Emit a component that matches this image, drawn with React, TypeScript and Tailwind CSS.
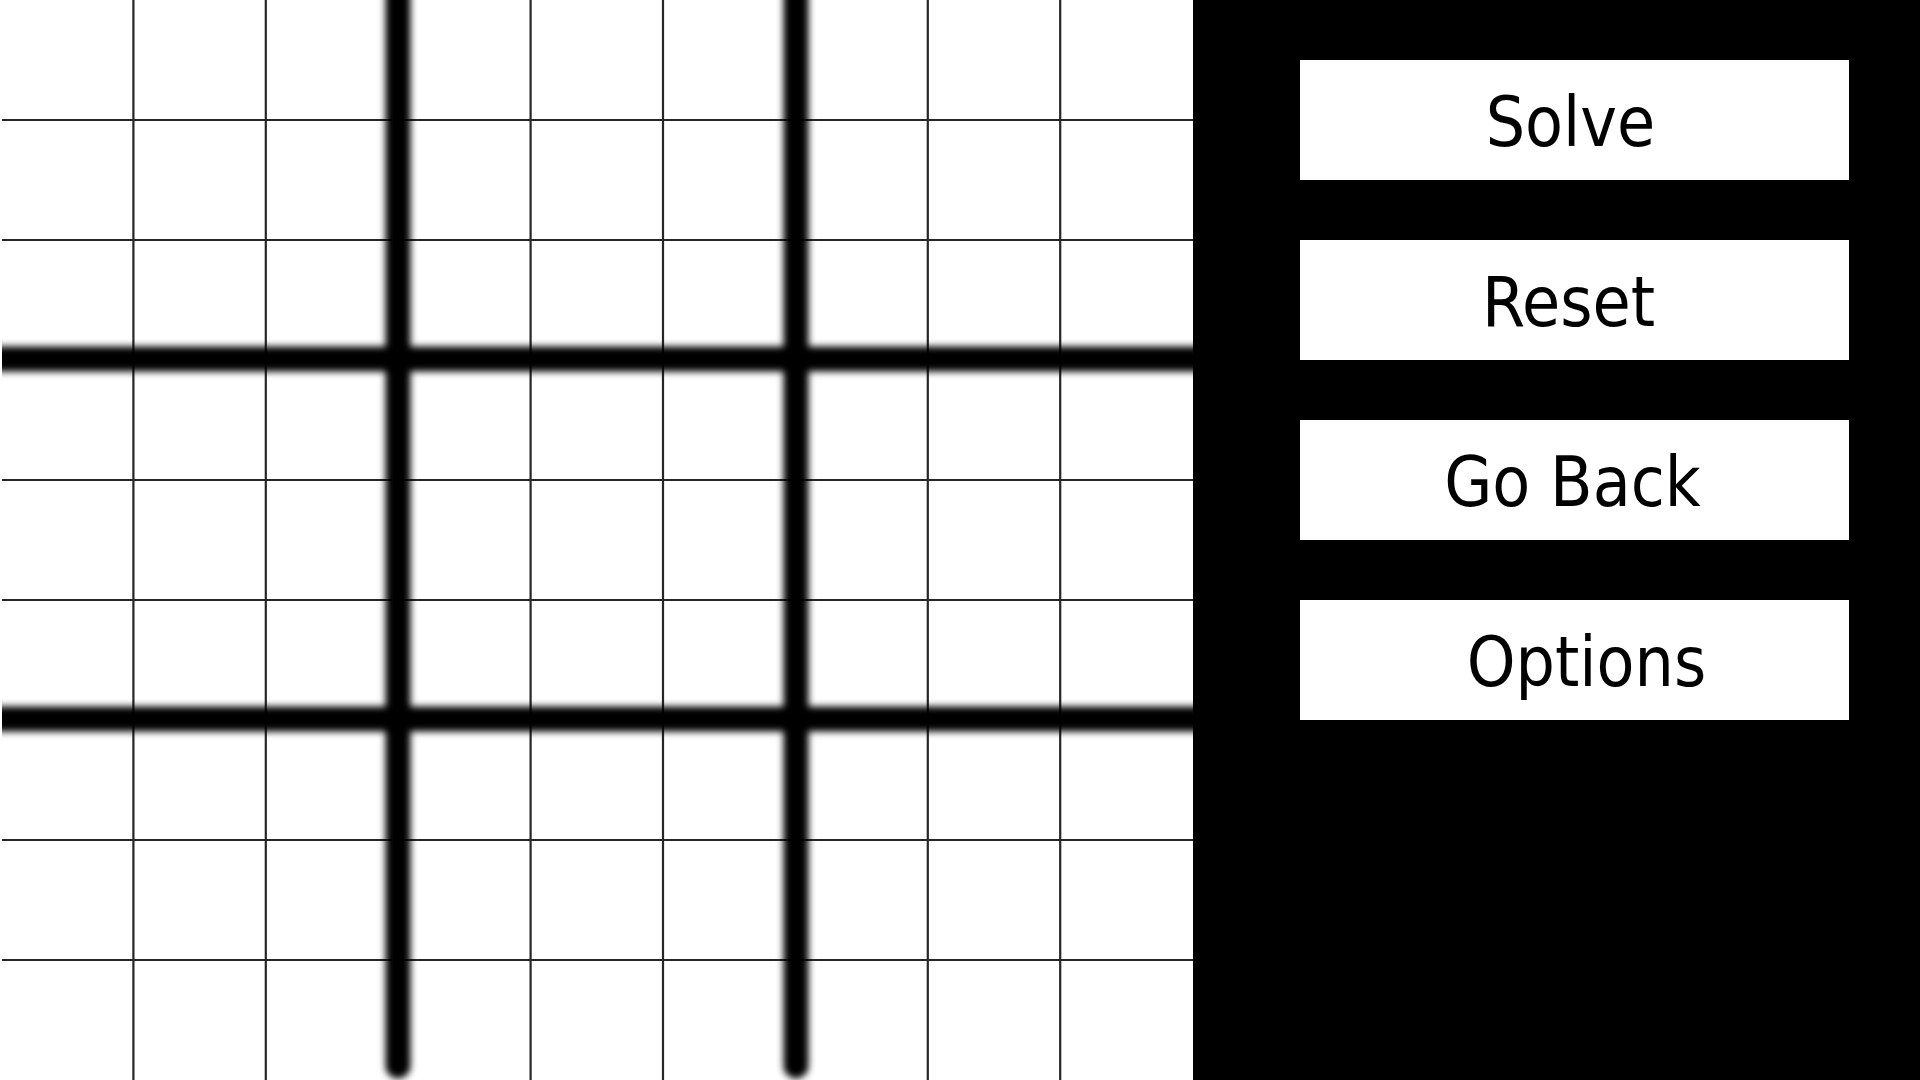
import React from 'react'

const BOARD_W = 1193
const BOARD_H = 1080
const LEFT = 2
const CELL_W = 132.4
const CELL_H = 120

const Board = () => {
  const cols = [1, 2, 4, 5, 7, 8]
  const rows = [1, 2, 4, 5, 7, 8]
  return (
    <div className="w-[1193px] h-full bg-white shrink-0 overflow-hidden">
      <svg width={BOARD_W} height={BOARD_H} viewBox={`0 0 ${BOARD_W} ${BOARD_H}`}>
        <defs>
          <filter id="soft" x="-10%" y="-10%" width="120%" height="120%">
            <feGaussianBlur stdDeviation="3.5" />
          </filter>
        </defs>
        {cols.map((c) => (
          <line key={`c${c}`} x1={1 + c * CELL_W} y1={0} x2={1 + c * CELL_W} y2={BOARD_H} stroke="#262626" strokeWidth={2.2} />
        ))}
        {rows.map((r) => (
          <line key={`r${r}`} x1={LEFT} y1={r * CELL_H} x2={BOARD_W} y2={r * CELL_H} stroke="#262626" strokeWidth={2.2} />
        ))}
        <g filter="url(#soft)">
          <line x1={398} y1={-20} x2={398} y2={1066} stroke="#000" strokeWidth={25} strokeLinecap="round" />
          <line x1={796} y1={-20} x2={796} y2={1066} stroke="#000" strokeWidth={25} strokeLinecap="round" />
          <line x1={-20} y1={359} x2={BOARD_W + 20} y2={359} stroke="#000" strokeWidth={25} />
          <line x1={-20} y1={719} x2={BOARD_W + 20} y2={719} stroke="#000" strokeWidth={25} />
        </g>
        <rect x={0} y={0} width={LEFT} height={BOARD_H} fill="#fff" />
      </svg>
    </div>
  )
}

const MenuButton = ({ label, className = '' }: { label: string; className?: string }) => (
  <button
    className={`w-[549px] h-[120px] bg-white text-black text-[69px] leading-none flex items-center justify-center pt-[5px] ${className}`}
    style={{ fontFamily: '"DejaVu Sans Condensed", "DejaVu Sans", sans-serif', fontStretch: 'condensed' }}
  >
    {label}
  </button>
)

export default function App() {
  return (
    <div className="w-screen h-screen flex bg-black overflow-hidden">
      <Board />
      <div className="flex-1 bg-black flex flex-col gap-[60px] pt-[60px] pl-[107px]">
        <MenuButton label="Solve" className="pr-[8px]" />
        <MenuButton label="Reset" className="pr-[12px]" />
        <MenuButton label="Go Back" className="pr-[4px]" />
        <MenuButton label="Options" className="pl-[24px]" />
      </div>
    </div>
  )
}
